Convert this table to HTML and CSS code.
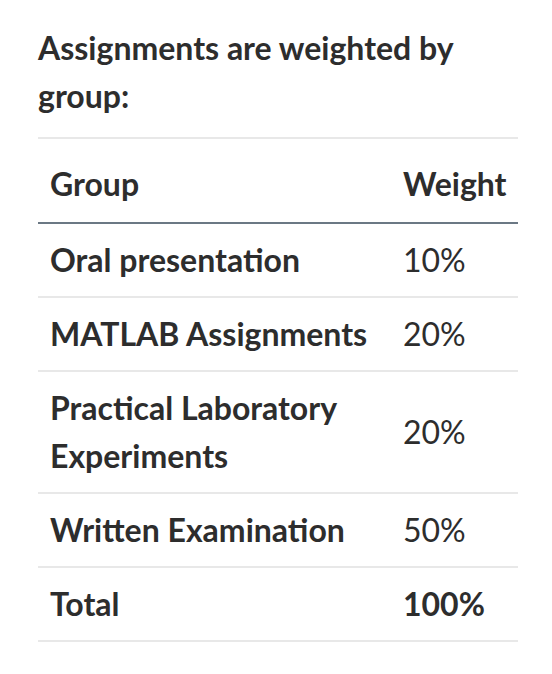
FILE: index.html
```html
<!DOCTYPE html>
<html lang="en">
<head>
<meta charset="utf-8">
<title>Assignment weights</title>
<link rel="stylesheet" href="styles.css">
</head>
<body>
<main class="weights">
  <h2 class="weights-title">Assignments are weighted by group:</h2>
  <table class="weights-table">
    <colgroup>
      <col class="col-group">
      <col class="col-weight">
    </colgroup>
    <thead>
      <tr>
        <th class="cell head">Group</th>
        <th class="cell head">Weight</th>
      </tr>
    </thead>
    <tbody>
      <tr>
        <th class="cell name">Oral presentation</th>
        <td class="cell value">10%</td>
      </tr>
      <tr>
        <th class="cell name">MATLAB Assignments</th>
        <td class="cell value">20%</td>
      </tr>
      <tr>
        <th class="cell name">Practical Laboratory Experiments</th>
        <td class="cell value">20%</td>
      </tr>
      <tr>
        <th class="cell name">Written Examination</th>
        <td class="cell value">50%</td>
      </tr>
      <tr class="total">
        <th class="cell name">Total</th>
        <td class="cell value strong">100%</td>
      </tr>
    </tbody>
  </table>
</main>
</body>
</html>
```

FILE: styles.css
```css
html, body {
  margin: 0;
  padding: 0;
  background: #ffffff;
}

body {
  font-family: Lato, "Noto Sans", sans-serif;
  color: #2d2d2d;
}

.weights {
  width: 480px;
  padding: 24px 0 0 38px;
}

.weights-title {
  margin: 0 0 17px;
  font-size: 32px;
  line-height: 48px;
  font-weight: 700;
}

.weights-table {
  width: 480px;
  table-layout: fixed;
  border-collapse: collapse;
  border-top: 2px solid #e8e8e8;
}

.col-group {
  width: 353px;
}

.col-weight {
  width: 127px;
}

.cell {
  text-align: left;
  vertical-align: middle;
  padding: 12px;
  font-size: 32px;
  line-height: 48px;
}

.head {
  font-weight: 700;
  padding-top: 21px;
  padding-bottom: 14px;
  border-bottom: 2px solid #6b7884;
}

.name {
  font-weight: 700;
}

.value {
  font-weight: 400;
}

.value.strong {
  font-weight: 700;
}

tbody tr {
  border-bottom: 2px solid #e8e8e8;
}
```
